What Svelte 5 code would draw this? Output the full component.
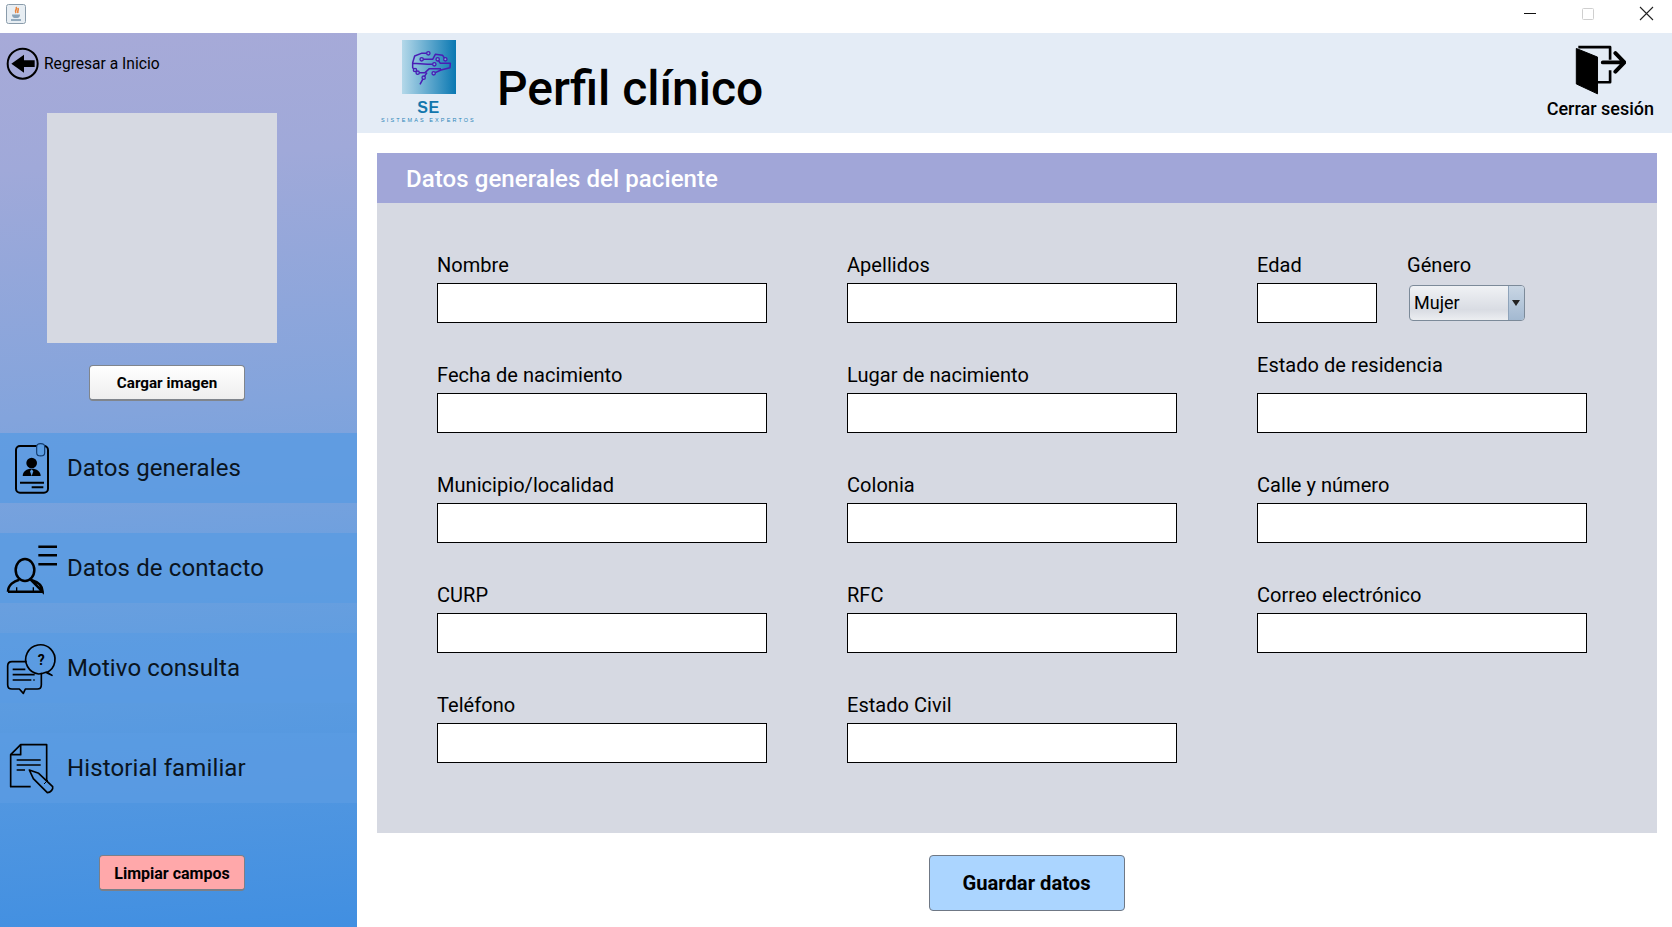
<script lang="ts">
  const fields = [
    { label: "Nombre" },
    { label: "Apellidos" },
    { kind: "edad" },
    { label: "Fecha de nacimiento" },
    { label: "Lugar de nacimiento" },
    { label: "Estado de residencia", raised: true },
    { label: "Municipio/localidad" },
    { label: "Colonia" },
    { label: "Calle y número" },
    { label: "CURP" },
    { label: "RFC" },
    { label: "Correo electrónico" },
    { label: "Teléfono" },
    { label: "Estado Civil" },
  ];
  const menu = ["Datos generales", "Datos de contacto", "Motivo consulta", "Historial familiar"];
</script>

<div class="win">
  <!-- Barra de titulo -->
  <div class="titlebar">
    <svg class="java" viewBox="0 0 20 20" width="20" height="20">
      <rect x="0.5" y="0.5" width="19" height="19" rx="2" fill="#e8eef3" stroke="#8a9cab" />
      <path d="M10 3c2 2-2 3 0 6M12 4c1 2-1 3 0 5" stroke="#e8833a" stroke-width="1.6" fill="none" />
      <path d="M6 10.5h8c0 3-2 3.5-4 3.5s-4-.5-4-3.5z" fill="#8aa3b8" />
      <path d="M5 16h10" stroke="#5d7f9b" stroke-width="1.2" />
    </svg>
    <div class="winbtns">
      <svg width="148" height="26" viewBox="0 0 148 26">
        <path d="M0 13.5h12" stroke="#111" stroke-width="1" />
        <rect x="58.5" y="8.5" width="11" height="11" rx="1" fill="none" stroke="#cfcfcf" stroke-width="1" />
        <path d="M116 7l13 13M129 7l-13 13" stroke="#222" stroke-width="1.1" />
      </svg>
    </div>
  </div>

  <div class="body">
    <!-- Menu lateral -->
    <aside class="side">
      <div class="back">
        <svg viewBox="15 135 105 105" width="35" height="35">
          <circle cx="68" cy="188" r="45" fill="none" stroke="#000" stroke-width="6" />
          <path d="M34 188l38-27v17h32v20H72v17z" fill="#000" />
        </svg>
        <span>Regresar a Inicio</span>
      </div>
      <div class="photo"></div>
      <button class="btn load">Cargar imagen</button>

      <nav class="menu">
        {#each menu as item, i}
          <div class="item">
            <svg class="ico" width="67" height="70" viewBox={["0 9 201 210", "0 309 201 210", "0 9 201 210", "0 309 201 210"][i]}>
              {#if i === 0}
                <g fill="none" stroke="#000" stroke-width="6">
                  <rect x="48" y="48" width="96" height="140" rx="12" />
                  <path d="M60 158h72M95 172h35" />
                  <path d="M110 50c0-12 24-12 24 0v18c0 13-24 13-24 0z" stroke="#123b6e" stroke-width="3.5" fill="#5b9de3" />
                </g>
                <circle cx="95" cy="99" r="16" fill="#000" />
                <path d="M68 138c0-14 12-22 27-22s27 8 27 22z" fill="#000" />
                <path d="M95 118l-5 6 5 14 5-14z" fill="#5b9de3" />
              {:else if i === 1}
                <g fill="none" stroke="#000" stroke-width="7.5">
                  <ellipse cx="75" cy="420" rx="28" ry="33" />
                  <path d="M24 485c0-20 18-32 34-36M92 449c20 6 36 16 36 36zM24 485h104" />
                  <path d="M50 472v12M100 472v12" stroke-width="4" />
                  <path d="M115 350h56M115 376h56M115 403h56" />
                </g>
              {:else if i === 2}
                <g fill="none" stroke="#000" stroke-width="5" stroke-linejoin="round">
                  <path d="M140 128a44 44 0 1 0-24 4c8 0 14-2 24-6l16 10z" />
                  <path d="M80 95H36c-8 0-13 5-13 13v56c0 8 5 13 13 13h22l12 13 6-13h36c8 0 12-5 12-13v-36" />
                  <path d="M38 118h38M38 134h66M38 150h56M100 150h4" />
                </g>
                <text x="124" y="106" class="q">?</text>
              {:else}
                <g fill="none" stroke="#000" stroke-width="5" stroke-linejoin="round">
                  <path d="M92 470H32V374l30-30h78v110" />
                  <path d="M62 344v30H32" />
                  <path d="M50 390h72M50 405h72M50 420h25" />
                  <path d="M88 420l28 10 42 40c2 8-6 18-16 18l-42-42z" />
                  <path d="M132 462l12-12" stroke-width="3" />
                </g>
              {/if}
            </svg>
            <span>{item}</span>
          </div>
        {/each}
      </nav>
      <button class="btn clear">Limpiar campos</button>
    </aside>

    <main class="content">
      <header class="head">
        <div class="logo">
          <div class="logo-box">
            <svg viewBox="3 3 162 160" width="54" height="54">
              <g fill="none" stroke="#4a1db5" stroke-width="4.5" stroke-linejoin="round">
                <path d="M42 92l-7-7V70l6-20 20-8h21M35 72l45 3h20M62 60h33l8-15 22 3 8 12M110 60l8 12h30l-1 13-27 7-22 10M50 100h22l13-12h35M57 135l11-20 10-15" />
              </g>
              <g fill="#6fb0d4" stroke="#4a1db5" stroke-width="4">
                <circle cx="82" cy="42" r="5" /><circle cx="62" cy="60" r="5" /><circle cx="110" cy="60" r="5" />
                <circle cx="133" cy="60" r="5" /><circle cx="100" cy="75" r="5" /><circle cx="42" cy="92" r="5" />
                <circle cx="50" cy="100" r="5" /><circle cx="98" cy="102" r="5" /><circle cx="68" cy="115" r="5" />
              </g>
            </svg>
          </div>
          <div class="se">SE</div>
          <div class="sub">SISTEMAS EXPERTOS</div>
        </div>
        <h1>Perfil clínico</h1>
        <div class="logout">
          <svg viewBox="288 128 154 150" width="51" height="50">
            <path d="M298 134h96v38M394 204v36h-38" fill="none" stroke="#000" stroke-width="8" stroke-linejoin="round" />
            <path d="M292 138l64 26v111l-64-30z" fill="#000" stroke="#000" stroke-width="3" stroke-linejoin="round" />
            <path d="M372 180h60M410 152l27 28-27 28" fill="none" stroke="#000" stroke-width="12" stroke-linecap="round" stroke-linejoin="round" />
          </svg>
          <span>Cerrar sesión</span>
        </div>
      </header>

      <section class="panel">
        <h2>Datos generales del paciente</h2>
        <div class="grid">
          {#each fields as f}
            {#if f.kind === "edad"}
              <div class="pair">
                <div class="field">
                  <label>Edad</label>
                  <input type="text" />
                </div>
                <div class="field">
                  <label>Género</label>
                  <div class="select">
                    <span>Mujer</span>
                    <i></i>
                  </div>
                </div>
              </div>
            {:else}
              <div class="field" class:raised={f.raised}>
                <label>{f.label}</label>
                <input type="text" />
              </div>
            {/if}
          {/each}
        </div>
      </section>

      <div class="foot">
        <button class="btn save">Guardar datos</button>
      </div>
    </main>
  </div>
</div>

<style>
  :global(body) { margin: 0; background: #fff; font-family: Roboto, "Liberation Sans", sans-serif; color: #000; }
  .win { width: 1672px; height: 927px; display: flex; flex-direction: column; overflow: hidden; }

  .titlebar { height: 33px; display: flex; align-items: flex-start; justify-content: space-between; background: #fff; flex-shrink: 0; }
  .java { margin: 4px 0 0 6px; }
  .winbtns { height: 26px; line-height: 0; }

  .body { flex: 1; display: flex; min-height: 0; }

  /* Menu lateral */
  .side {
    width: 357px; flex-shrink: 0; display: flex; flex-direction: column;
    background: linear-gradient(176deg, #a7aad8 0%, #a0a9d9 15%, #83a4dc 42%, #5f9de0 70%, #418fe1 100%);
  }
  .back { display: flex; align-items: center; gap: 4px; height: 35px; margin: 13px 0 1px 5px; font-size: 15.6px; }
  .photo { width: 230px; height: 230px; margin: 31px 0 0 47px; background: #d6d9e2; }
  .btn { font-family: inherit; font-weight: 700; color: #000; cursor: pointer; border-radius: 4px; }
  .load {
    width: 156px; height: 36px; margin: 22px 0 0 89px; font-size: 15.2px;
    border: 1px solid #80858c; border-bottom-width: 2px;
    background: linear-gradient(#fff, #eeeeee);
  }
  .menu { margin-top: 32px; display: flex; flex-direction: column; gap: 30px; }
  .item { height: 70px; display: flex; align-items: center; background: rgba(90, 155, 226, 0.82); font-size: 24px; letter-spacing: 0.12px; color: #0a1420; }
  .ico { flex-shrink: 0; }
  .q { font: 700 42px Roboto, sans-serif; text-anchor: middle; fill: #000; }
  .clear {
    width: 146px; height: 36px; margin: 52px 0 0 99px; padding-top: 2px; font-size: 16px;
    border: 1px solid #7a7f88; border-bottom-width: 2px; background: #ffa8aa;
  }

  /* Contenido */
  .content { flex: 1; min-width: 0; display: flex; flex-direction: column; }
  .head { height: 100px; display: flex; align-items: center; background: #e4ecf6; flex-shrink: 0; }
  .logo { width: 95px; margin: -2px 0 0 24px; display: flex; flex-direction: column; align-items: center; }
  .logo-box { width: 54px; height: 54px; background: linear-gradient(90deg, #b4d8e9, #0a78b2); }
  .logo-box svg { display: block; }
  .se { font: 700 16px/15px "Liberation Sans", sans-serif; color: #1276ad; margin-top: 6px; letter-spacing: 0.6px; }
  .sub { font: 400 5.5px/8px "Liberation Sans", sans-serif; color: #2a86b8; letter-spacing: 2.1px; white-space: nowrap; margin-top: 1px; }
  h1 { margin: 12px 0 0 21px; font-size: 48px; font-weight: 500; flex: 1; line-height: 1; }
  .logout { display: flex; flex-direction: column; align-items: center; margin: -3px 18px 0 0; font-size: 18px; font-weight: 500; gap: 3px; }

  .panel { margin: 20px 15px 0 20px; height: 680px; background: #d6d9e2; }
  h2 { margin: 0; height: 50px; line-height: 52px; padding-left: 29px; background: #a1a6d8; color: #fff; font-size: 24px; letter-spacing: 0.08px; font-weight: 500; }
  .grid { display: grid; grid-template-columns: repeat(3, 330px); column-gap: 80px; row-gap: 40px; padding: 50px 0 0 60px; }
  .field { height: 70px; display: flex; flex-direction: column; justify-content: flex-end; }
  .field.raised label { margin-bottom: 16px; }
  label { font-size: 20px; letter-spacing: 0.04px; line-height: 24px; margin-bottom: 6px; flex-shrink: 0; }
  input { box-sizing: border-box; flex-shrink: 0; width: 100%; height: 40px; border: 1px solid #000; background: #fff; outline: none; padding: 0 4px; }
  .pair { display: grid; grid-template-columns: 120px 1fr; column-gap: 30px; }
  .pair .field:last-child label { margin-bottom: 8px; }
  .select {
    box-sizing: border-box; width: 116px; height: 36px; margin: 0 0 2px 2px; display: flex; justify-content: space-between;
    border: 1px solid #7c8a99; border-radius: 4px; overflow: hidden;
    background: linear-gradient(#f0f2f5, #d9dce3 70%, #eceef1);
    font-size: 18px; line-height: 33px;
  }
  .select span { padding-left: 4px; }
  .select i {
    width: 15px; position: relative; border-left: 1px solid #8ea3ba;
    background: linear-gradient(#c9d6e4, #a3b9d1);
  }
  .select i::after {
    content: ""; position: absolute; left: 3px; top: 14px;
    border: 4px solid transparent; border-top: 6px solid #222; border-bottom: 0;
  }

  .foot { display: flex; justify-content: center; padding: 22px 0 0 24px; }
  .save {
    width: 196px; height: 56px; font-size: 20.2px;
    border: 1px solid #6f7885; background: #abd5ff;
  }
</style>
